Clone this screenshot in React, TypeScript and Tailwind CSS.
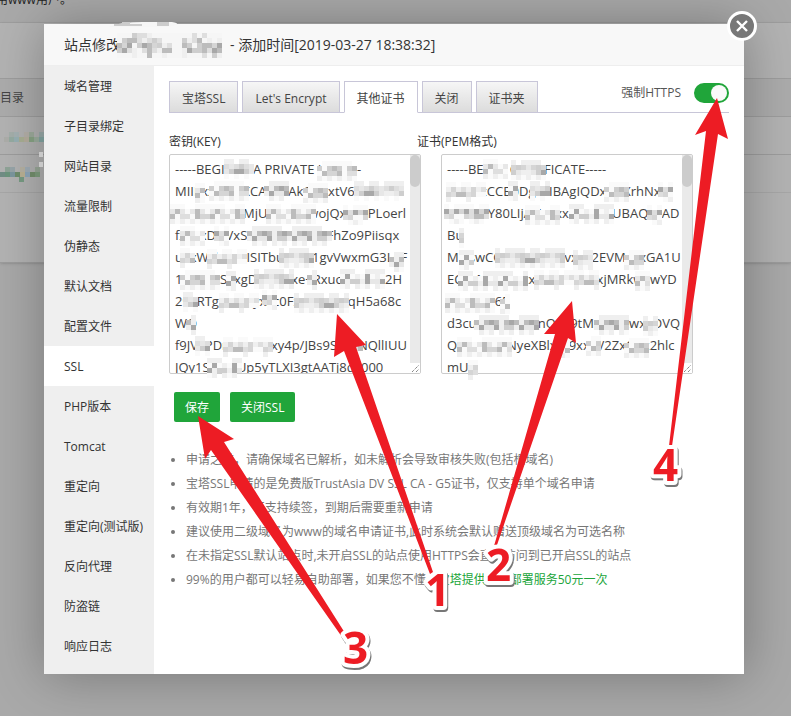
import { useState } from "react";

const menuItems = [
  "域名管理",
  "子目录绑定",
  "网站目录",
  "流量限制",
  "伪静态",
  "默认文档",
  "配置文件",
  "SSL",
  "PHP版本",
  "Tomcat",
  "重定向",
  "重定向(测试版)",
  "反向代理",
  "防盗链",
  "响应日志",
];

const tabs = ["宝塔SSL", "Let's Encrypt", "其他证书", "关闭", "证书夹"];

const tips = [
  "申请之前，请确保域名已解析，如未解析会导致审核失败(包括根域名)",
  "宝塔SSL申请的是免费版TrustAsia DV SSL CA - G5证书，仅支持单个域名申请",
  "有效期1年，不支持续签，到期后需要重新申请",
  "建议使用二级域名为www的域名申请证书,此时系统会默认赠送顶级域名为可选名称",
  "在未指定SSL默认站点时,未开启SSL的站点使用HTTPS会直接访问到已开启SSL的站点",
];

const keyText = `-----BEGIN RSA PRIVATE KEY-----
MIIExxxxxxKCACxxAkQhxxtV6Cxxxxxx
xxxxxxxxxxMjUxxxxxxwojQxxxVPLoerl
fxxxxDHVxSAxxxxxxxxxviFhZo9Piisqx
uxxWclnxxxISITbuVxxL1gvVwxmG3LgF
1xxxxJxSxxgDxxxxxxe+RxucCxxxxo2H
29xRTgxxxxxyxxc0FxxxxxxxxqH5a68c
WQ
f9JVxPDnxxxxxxxy4p/JBs9SYxxNQllIUU
JQy1SxxxxUp5yTLXI3gtAATj8dc000`;

const certText = `-----BEGIN CERTIFICATE-----
MIIExxCCB0DgxxIBAgIQDxxwXrhNxO
xxxxxxY80LIjANxxxxqhxxxxUBAQxxAD
Bu
MQswCQxxxxxxxxxvxxx2EVMxxxGA1U
ECxMxxxxxxxxxxxxxxxxxxjMRkwFwYD
xxxxxxx65
d3cuxxxxxxxxLnQx29tMxxxxKwxxDVQ
QDyxxxxxNyeXBlxW9xxxV2ZxQxx2hlc
mUx`;

// x, y, number of columns
const keyPatches: [number, number, number][] = [
  [224, 159, 6], [317, 161, 8],
  [195, 183, 2], [209, 181, 8], [264, 181, 5], [303, 183, 5], [354, 181, 10],
  [170, 204, 15], [266, 204, 10], [343, 205, 5],
  [180, 226, 5], [214, 226, 3], [247, 226, 17],
  [180, 248, 3], [207, 249, 8], [279, 248, 7], [389, 252, 3],
  [180, 270, 8], [226, 271, 2], [254, 269, 8], [307, 270, 2], [340, 269, 9],
  [183, 292, 3], [219, 293, 8], [262, 290, 3], [294, 293, 11],
  [186, 315, 2],
  [195, 336, 3], [223, 337, 10], [348, 336, 3],
  [207, 358, 7],
];

const certPatches: [number, number, number][] = [
  [483, 159, 5], [511, 160, 7],
  [446, 182, 8], [508, 181, 2], [530, 181, 4], [604, 182, 5], [658, 182, 3],
  [444, 204, 9], [525, 205, 7], [569, 204, 9], [647, 205, 3],
  [459, 228, 1],
  [459, 250, 3], [495, 248, 14], [573, 250, 4], [624, 250, 4],
  [458, 271, 14], [534, 270, 13], [635, 271, 3],
  [445, 293, 10], [500, 294, 2],
  [474, 315, 13], [560, 316, 2], [594, 315, 7], [643, 316, 3],
  [457, 337, 11], [560, 338, 2], [586, 336, 3], [624, 338, 5],
  [468, 360, 2],
];

const greys = ["#fafafa", "#efefef", "#dedede", "#cecece", "#bcbcbc", "#a8a8a8", "#d5d5d5", "#e7e7e7"];

function Patch({ x, y, cols }: { x: number; y: number; cols: number }) {
  const cells = [];
  for (let r = 0; r < 4; r++) {
    for (let c = 0; c < cols; c++) {
      const n = (x * 7 + y * 3 + c * 11 + r * 5 + c * c * 3 + r * c * 7) % 8;
      const edge = r === 0 || r === 3;
      if (edge && n > 5) continue;
      cells.push(
        <rect
          key={`${r}-${c}`}
          x={x + c * 5}
          y={y + r * 5}
          width={5}
          height={5}
          fill={edge ? greys[n % 2] : greys[n]}
        />,
      );
    }
  }
  return <g shapeRendering="crispEdges">{cells}</g>;
}

const titleMosaic = [
  "...3221........2.2...",
  ".34421232....3124.1.1",
  "465.3546312..43.34465",
  "3521.242144..15334254",
  "...1..4..1...1...2.31",
];

const rowColors = [
  ["#a9aaa6", "#91a69d", "#92a9ac", "#a0a68c", "#a9a293", "#7c9579", "#8c9c8e", "#74928f"],
  ["#6f8b83", "#69917a", "#78929a", "#6a8768", "#b0a88c", "#849bac", "#698263", "#718c70"],
];

const arrows = [
  "337,314 366,345 356,347 433,572 430,574 344,351 334,357",
  "572,301 576,343 568,338 497,545 494,546 555,334 544,334",
  "198,416 234,439 224,442 345,633 342,637 211,450 205,459",
  "717,98 728,139 718,134 672,446 669,446 706,131 695,135",
];

const digits = [
  { text: "1", x: 425, y: 606 },
  { text: "2", x: 486, y: 581 },
  { text: "3", x: 343, y: 664 },
  { text: "4", x: 653, y: 481 },
];

function Annotations() {
  return (
    <svg
      viewBox="44 24 700 650"
      className="pointer-events-none absolute top-0 left-0 h-[650px] w-[700px] overflow-visible"
      aria-hidden="true"
    >
      {/* mosaic over private data */}
      <path d="M108 27 Q120 22 143 22 H172 Q184 24 168 27 Z" fill="#f6f6f6" />
      <path d="M110 26h4v-2h8v-2h8v2h12v2zM157 22h12v4h-12z" fill="#ccc" />
      <g shapeRendering="crispEdges">
        {titleMosaic.map((row, r) =>
          row.split("").map((ch, c) => (
            <rect
              key={`${r}-${c}`}
              x={117 + c * 5}
              y={33 + r * 5}
              width={5}
              height={5}
              fill={ch === "." ? "#f6f6f6" : greys[Number(ch)]}
            />
          )),
        )}
        {rowColors.map((row, r) =>
          row.map((fill, c) => (
            <g key={`${r}-${c}`} fill={fill}>
              <rect x={4 - r * 4 + c * 5} y={r === 0 ? 137 : 172} width={5} height={5} />
              {c % 3 !== 0 && (
                <rect x={4 - r * 4 + c * 5} y={r === 0 ? 132 : 167} width={5} height={5} opacity={0.5} />
              )}
            </g>
          )),
        )}
        <path d="M39 152h4v5h-4zM39 162h4v5h-4z" fill="#c9c9c9" />
        <path d="M19 177h5v5h-5z" fill="#71937c" />
      </g>
      {keyPatches.map(([x, y, cols]) => (
        <Patch key={`${x}-${y}`} x={x} y={y} cols={cols} />
      ))}
      {certPatches.map(([x, y, cols]) => (
        <Patch key={`${x}-${y}`} x={x} y={y} cols={cols} />
      ))}

      {arrows.map((points) => (
        <polygon key={points} points={points} fill="#ed1c24" />
      ))}
      <g
        fontFamily="'Open Sans', sans-serif"
        fontSize="44"
        fontWeight="700"
        fill="#ed1c24"
        stroke="#fff"
        strokeWidth="8"
        strokeLinejoin="round"
        paintOrder="stroke"
        className="drop-shadow-[1px_2px_0_#777]"
      >
        {digits.map((d) => (
          <text key={d.text} x={d.x} y={d.y}>
            {d.text}
          </text>
        ))}
      </g>
    </svg>
  );
}

function CodeBox({ id, value }: { id: string; value: string }) {
  return (
    <div className="relative flex h-[220px] w-[252px] rounded-xs border border-[#ccc] bg-white">
      <textarea
        id={id}
        spellCheck={false}
        defaultValue={value}
        className="min-w-0 flex-1 resize-none overflow-x-hidden overflow-y-auto px-[5px] py-[3px] text-[13px] leading-[22px] whitespace-pre text-[#444] outline-none [scrollbar-width:none]"
      />
      <div className="flex w-[10px] flex-col bg-[#eaeaea]">
        <div className="h-8 rounded-full bg-[#ccc]" />
        <svg viewBox="0 0 10 10" className="mt-auto size-[10px] bg-white" stroke="#555" strokeDasharray="1 1">
          <path d="M2 9L9 2M6 9L9 6" />
        </svg>
      </div>
    </div>
  );
}

export default function App() {
  const [active, setActive] = useState("SSL");
  const [tab, setTab] = useState("其他证书");
  const [forceHttps, setForceHttps] = useState(true);

  return (
    <div className="relative min-h-screen overflow-hidden bg-[#a9a9a9] font-['Open_Sans','Noto_Sans_CJK_SC',sans-serif] text-xs text-[#333]">
      {/* Page behind the dialog */}
      <div className="absolute inset-x-0 top-0">
        <div className="h-[23px] overflow-hidden border-b border-[#a0a0a0]">
          <p className="-mt-2 -ml-1 leading-4 text-[#222]">用www用户。</p>
        </div>
        <div className="border-b border-[#9c9c9c] bg-[#b3b3b3] pt-[55px] pb-[69px] shadow-sm">
          <div className="flex h-[39px] items-center border-y border-[#9d9d9d] bg-[#acacac] text-xs text-[#444]">
            <span className="-ml-3">录目录</span>
          </div>
          <div className="h-[38px] border-b border-[#9d9d9d]" />
          <div className="h-[38px] border-b border-[#a7a7a7]" />
        </div>
      </div>

      <div className="relative pt-6 pr-[47px] pb-[42px] pl-11">
        <div
          role="dialog"
          aria-label="站点修改"
          className="relative w-full max-w-[700px] bg-white shadow-[1px_1px_50px_rgba(0,0,0,0.3)]"
        >
          <header className="flex h-[42px] items-center gap-[110px] border-b border-[#eee] bg-[#f8f8f8] px-5 text-sm">
            <h1>站点修改</h1>
            <span>- 添加时间[2019-03-27 18:38:32]</span>
          </header>
          <button
            aria-label="关闭窗口"
            className="absolute -top-[13px] -right-[13px] flex size-[30px] items-center justify-center rounded-full border-3 border-white bg-[#777]"
          >
            <svg viewBox="0 0 24 24" className="size-6" fill="none" stroke="#fff" strokeWidth="2.4">
              <path d="M7 7l10 10M17 7L7 17" />
            </svg>
          </button>

          <div className="flex">
            <nav className="w-[110px] shrink-0 bg-[#efefef] pb-2">
              {menuItems.map((item) => (
                <button
                  key={item}
                  onClick={() => setActive(item)}
                  className={`block h-10 w-full pt-0.5 pl-5 text-left whitespace-nowrap ${active === item ? "bg-white" : ""}`}
                >
                  {item}
                </button>
              ))}
            </nav>

            <main className="min-w-0 flex-1 p-[15px]">
              <div className="flex items-start border-b border-[#c8c6d8]">
                <div className="-mb-px flex gap-1">
                  {tabs.map((t) => (
                    <button
                      key={t}
                      onClick={() => setTab(t)}
                      className={`h-8 border border-[#c8c6d8] px-3 pt-1 text-[#444] ${tab === t ? "border-b-white bg-white" : "bg-linear-to-b from-[#f6f6f6] to-[#dcdcdc]"}`}
                    >
                      {t}
                    </button>
                  ))}
                </div>
                <label className="ml-auto flex h-6 items-center gap-[13px] text-[#555]">
                  强制HTTPS
                  <input
                    type="checkbox"
                    checked={forceHttps}
                    onChange={(e) => setForceHttps(e.target.checked)}
                    className="h-5 w-[35px] appearance-none rounded-full border-2 border-[#ddd] bg-[#ddd] before:block before:size-4 before:rounded-full before:bg-[#fafafa] checked:border-[#20a53a] checked:bg-[#20a53a] checked:before:ml-[15px]"
                  />
                </label>
              </div>

              <div className="flex pt-5">
                <div className="w-[248px] shrink-0">
                  <label htmlFor="key" className="mb-[3px] block leading-[18px]">
                    密钥(KEY)
                  </label>
                  <CodeBox id="key" value={keyText} />
                </div>
                <div>
                  <label htmlFor="csr" className="mb-[3px] block leading-[18px]">
                    证书(PEM格式)
                  </label>
                  <div className="pl-6">
                    <CodeBox id="csr" value={certText} />
                  </div>
                </div>
              </div>

              <div className="mt-[18px] ml-[5px] flex gap-[10px]">
                <button className="h-[30px] rounded-xs bg-[#20a53a] px-[11px] pt-0.5 text-white">保存</button>
                <button className="h-[30px] rounded-xs bg-[#20a53a] px-[11px] pt-0.5 text-white">关闭SSL</button>
              </div>

              <ul className="mt-[26px] list-disc pl-[17px] leading-6 text-[#777]">
                {tips.map((tip) => (
                  <li key={tip}>{tip}</li>
                ))}
                <li>
                  99%的用户都可以轻易自助部署，如果您不懂，
                  <a href="#service" className="text-[#20a53a]">
                    宝塔提供证书部署服务50元一次
                  </a>
                </li>
              </ul>
            </main>
          </div>

          <Annotations />
        </div>
      </div>
    </div>
  );
}
